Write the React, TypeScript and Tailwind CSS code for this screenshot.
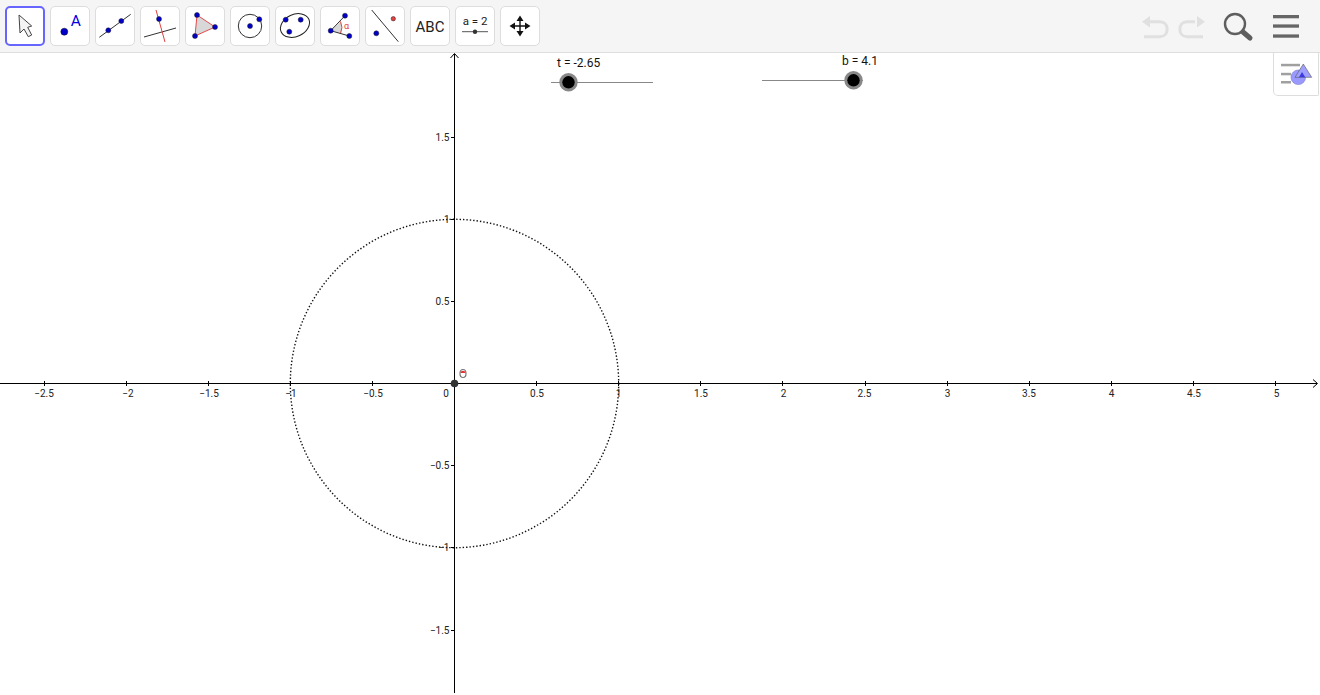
import React from "react";

const B = "#0000c8";
const P = ({ x, y, c = B, r = 2.5 }: { x: number; y: number; c?: string; r?: number }) => (
  <circle cx={x} cy={y} r={r} fill={c} stroke="#222" strokeWidth={0.5} />
);

const Tool = ({ selected, children }: { selected?: boolean; children: React.ReactNode }) => (
  <button
    className={
      selected
        ? "w-10 h-10 shrink-0 rounded-[5px] bg-white border-2 border-[#6666ff] flex items-center justify-center"
        : "w-10 h-10 shrink-0 rounded-[5px] bg-white border border-[#dddddd] flex items-center justify-center"
    }
  >
    <svg width="40" height="40" viewBox="0 0 40 40" className="shrink-0">
      {children}
    </svg>
  </button>
);

const xLabels: [string, number][] = [
  ["−2.5", 44], ["−2", 128], ["−1.5", 209], ["−1", 291], ["−0.5", 373], ["0", 446], ["0.5", 537], ["1", 618.5],
  ["1.5", 701], ["2", 783.5], ["2.5", 864.5], ["3", 947.5], ["3.5", 1029], ["4", 1111.5], ["4.5", 1194], ["5", 1276.5],
];
const xTicks = [-2.5, -2, -1.5, -1, -0.5, 0.5, 1, 1.5, 2, 2.5, 3, 3.5, 4, 4.5, 5];
const yLabels: [string, number][] = [
  ["1.5", 137.5], ["1", 219.5], ["0.5", 301.5], ["−0.5", 465.5], ["−1", 547.5], ["−1.5", 630.5],
];

export default function App() {
  return (
    <div className="w-[1320px] h-[695px] overflow-hidden bg-white flex flex-col relative font-['Roboto',sans-serif]">
      <div className="h-[53px] shrink-0 bg-[#f5f5f5] border-b border-[#dedede] flex items-center pl-[5px] pb-[1px] gap-[5px]">
        <Tool selected>
          <path d="M14 9 L15 27 L19 23 L23.3 30.7 L26.7 29 L22.7 21.3 L26.7 20 Z" fill="#f4f4f4" stroke="#444" strokeWidth={1} />
        </Tool>
        <Tool>
          <circle cx={14.3} cy={25.7} r={3.5} fill={B} stroke="#111" strokeWidth={0.5} />
          <text x={20.8} y={20} fontSize={15.5} fill="#0000e0" fontFamily="Roboto, sans-serif">A</text>
        </Tool>
        <Tool>
          <line x1={4.3} y1={31.3} x2={35.7} y2={8.3} stroke="#333" strokeWidth={1} />
          <P x={13.3} y={24.3} />
          <P x={26.3} y={15} />
        </Tool>
        <Tool>
          <line x1={4} y1={31} x2={36} y2={22} stroke="#333" strokeWidth={1} />
          <line x1={16} y1={4} x2={25} y2={36} stroke="#e04040" strokeWidth={1} />
          <P x={19} y={13} />
        </Tool>
        <Tool>
          <path d="M12 9 L30 21 L10 30 Z" fill="#d8d8d8" stroke="#e84a4a" strokeWidth={1} />
          <P x={12} y={9} />
          <P x={30} y={21} />
          <P x={10} y={30} />
        </Tool>
        <Tool>
          <circle cx={20} cy={20} r={11.7} fill="none" stroke="#333" strokeWidth={1} />
          <P x={20} y={20} />
          <P x={29.3} y={13.3} />
        </Tool>
        <Tool>
          <ellipse cx={20} cy={19.5} rx={15.2} ry={11} fill="none" stroke="#222" strokeWidth={1} transform="rotate(-25 20 19.5)" />
          <P x={10.7} y={13.7} />
          <P x={25.7} y={13.7} />
          <P x={14.3} y={25.7} />
        </Tool>
        <Tool>
          <path d="M10.7 24.7 L20.5 15.5 A14 14 0 0 1 20.5 27.5 Z" fill="#d8d8d8" />
          <path d="M20.5 15.5 A14 14 0 0 1 20.5 27.5" fill="none" stroke="#e04040" strokeWidth={1} />
          <line x1={10.7} y1={24.7} x2={25} y2={9.7} stroke="#333" strokeWidth={1} />
          <line x1={10.7} y1={24.7} x2={29.3} y2={30} stroke="#333" strokeWidth={1} />
          <P x={10.7} y={24.7} />
          <P x={25} y={9.7} />
          <P x={29.3} y={30} />
          <text x={26.5} y={23} textAnchor="middle" fontSize={9} fill="#e04040" fontFamily="Roboto, sans-serif">α</text>
        </Tool>
        <Tool>
          <line x1={6.7} y1={4} x2={33.3} y2={35.7} stroke="#333" strokeWidth={1} />
          <P x={11.3} y={27.3} />
          <P x={28.3} y={12.7} c="#e04040" r={2.2} />
        </Tool>
        <Tool>
          <text x={20} y={25.7} textAnchor="middle" fontSize={15} fill="#222" fontFamily="Roboto, sans-serif">ABC</text>
        </Tool>
        <Tool>
          <text x={20} y={19} textAnchor="middle" fontSize={11.5} fill="#222" fontFamily="Roboto, sans-serif">a = 2</text>
          <line x1={7} y1={25.7} x2={33} y2={25.7} stroke="#555" strokeWidth={1} />
          <circle cx={20} cy={25.7} r={2.2} fill="#333" />
        </Tool>
        <Tool>
          <path d="M20 12 V28 M12 20 H28" stroke="#111" strokeWidth={1.4} />
          <path d="M20 9.5 L16.5 15 H23.5 Z M20 30.5 L16.5 25 H23.5 Z M9.5 20 L15 16.5 V23.5 Z M30.5 20 L25 16.5 V23.5 Z" fill="#111" />
        </Tool>
        <div className="flex-1" />
        <svg width="170" height="46" viewBox="0 0 170 46" className="shrink-0 mr-[14px]">
          <g fill="none" stroke="#e0e0e0" strokeWidth={3}>
            <path d="M12 18.7 H24 C33.5 18.7 33.5 33.7 24 33.7 H8" />
            <path d="M59 18.7 H51 C41.5 18.7 41.5 33.7 51 33.7 H67" />
          </g>
          <path d="M14 13 L6 18.7 L14 24.5 Z M61 13 L69 18.7 L61 24.5 Z" fill="#e0e0e0" />
          <circle cx={99} cy={21} r={10} fill="none" stroke="#5e5e5e" strokeWidth={2.4} />
          <line x1={107} y1={29} x2={114} y2={35} stroke="#5e5e5e" strokeWidth={5} strokeLinecap="round" />
          <g fill="#666">
            <rect x={137} y={12} width={26} height={3.3} />
            <rect x={137} y={21.4} width={26} height={3.3} />
            <rect x={137} y={31.4} width={26} height={3.3} />
          </g>
        </svg>
      </div>

      <div className="relative flex-1">
        <svg width="1320" height="642" viewBox="0 53 1320 642" className="block" fontFamily="Roboto, sans-serif">
          <circle cx={454.5} cy={383.5} r={164.2} fill="none" stroke="#111" strokeWidth={1.4} strokeDasharray="1.4 2" />
          <line x1={0} y1={383.5} x2={1317} y2={383.5} stroke="#000" strokeWidth={1} />
          <line x1={454.5} y1={54} x2={454.5} y2={693} stroke="#000" strokeWidth={1} />
          <path d="M1313 379.5 L1317.5 383.5 L1313 387.5" fill="none" stroke="#000" strokeWidth={1} />
          <path d="M450.5 58 L454.5 53.5 L458.5 58" fill="none" stroke="#000" strokeWidth={1} />
          {xTicks.map((v) => (
            <line key={v} x1={Math.floor(454.5 + v * 164.2) + 0.5} y1={381} x2={Math.floor(454.5 + v * 164.2) + 0.5} y2={386} stroke="#000" strokeWidth={1} />
          ))}
          {yLabels.map(([, y]) => (
            <line key={y} x1={451} y1={y} x2={454} y2={y} stroke="#000" strokeWidth={1} />
          ))}
          <g fontSize={10} fill="#222">
            {xLabels.map(([t, x]) => (
              <text key={t} x={x} y={397} textAnchor="middle">{t}</text>
            ))}
            {yLabels.map(([t, y]) => (
              <text key={t} x={449.5} y={y + 3} textAnchor="end">{t}</text>
            ))}
          </g>

          <circle cx={454.5} cy={383.5} r={3.8} fill="#333" />
          <ellipse cx={463} cy={373.5} rx={3} ry={4} fill="#fff" stroke="#777" strokeWidth={1.2} />
          <path d="M460.4 373 A2.7 3.2 0 0 1 465.6 373 Z" fill="#e83030" />

          <g>
            <text x={557} y={67} fontSize={12} fill="#111">t = -2.65</text>
            <line x1={551} y1={82.5} x2={653} y2={82.5} stroke="#888" strokeWidth={1} />
            <circle cx={568.5} cy={82.3} r={9.2} fill="#888" />
            <circle cx={568.5} cy={82.3} r={6.2} fill="#000" />
          </g>
          <g>
            <text x={842} y={65} fontSize={12} fill="#111">b = 4.1</text>
            <line x1={762} y1={80.5} x2={863} y2={80.5} stroke="#888" strokeWidth={1} />
            <circle cx={853.5} cy={80.3} r={9.2} fill="#888" />
            <circle cx={853.5} cy={80.3} r={6.2} fill="#000" />
          </g>
        </svg>

        <button className="absolute top-0 right-[1px] w-[46px] h-[43px] bg-white border-l border-b border-r border-[#dddddd] rounded-bl-[5px] rounded-br-[2px] flex items-center justify-center">
          <svg width="34" height="28" viewBox="0 0 34 28" className="shrink-0">
            <g fill="#a0a0a0">
              <rect x={2} y={3.8} width={19} height={2.5} />
              <rect x={2} y={12.8} width={10} height={2.5} />
              <rect x={2} y={21} width={10} height={2.5} />
            </g>
            <circle cx={19.3} cy={17.3} r={7.3} fill="#9999ff" stroke="#7a7ac8" strokeWidth={0.6} />
            <path d="M24.3 4 L32.7 17.3 H16 Z" fill="#a0a0ff" stroke="#555" strokeWidth={0.6} />
            <path d="M20 17.3 L23 12 L26.3 17.3 Z" fill="#3a3ae0" />
          </svg>
        </button>
      </div>
    </div>
  );
}
